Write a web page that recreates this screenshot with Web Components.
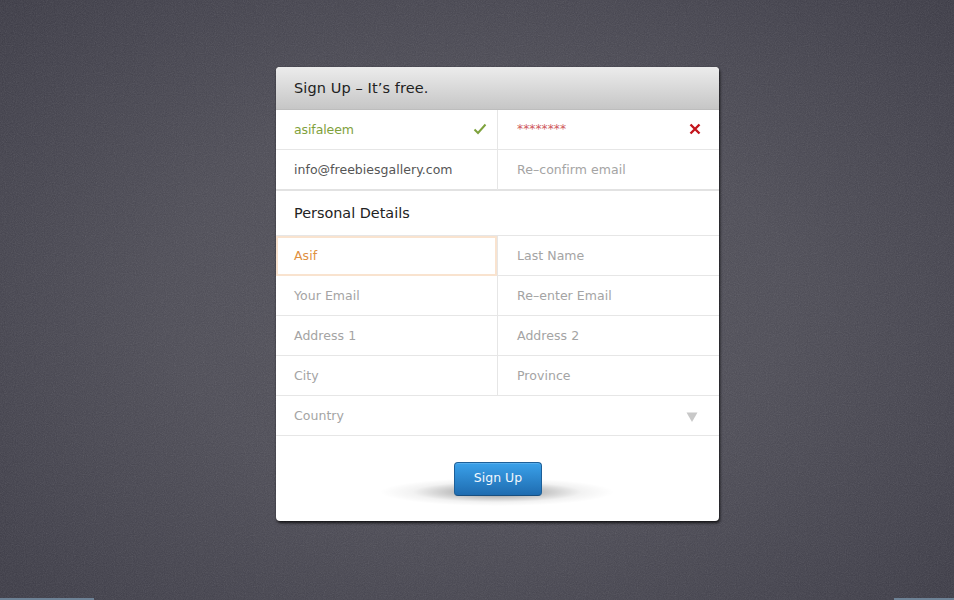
<!DOCTYPE html>
<html><head><meta charset="utf-8"><title>Sign Up</title>
<style>html,body{margin:0;padding:0;background:#4a4954}</style></head>
<body>
<su-page>
  <su-card>
    <su-header slot="header">Sign Up – It’s free.</su-header>
    <su-row>
      <su-field state="ok">asifaleem</su-field>
      <su-field state="err" second>********</su-field>
    </su-row>
    <su-row heavy>
      <su-field state="filled">info@freebiesgallery.com</su-field>
      <su-field second>Re–confirm email</su-field>
    </su-row>
    <su-section>Personal Details</su-section>
    <su-row>
      <su-field state="focus">Asif</su-field>
      <su-field second>Last Name</su-field>
    </su-row>
    <su-row>
      <su-field>Your Email</su-field>
      <su-field second>Re–enter Email</su-field>
    </su-row>
    <su-row>
      <su-field>Address 1</su-field>
      <su-field second>Address 2</su-field>
    </su-row>
    <su-row>
      <su-field>City</su-field>
      <su-field second>Province</su-field>
    </su-row>
    <su-row single>
      <su-field state="select">Country</su-field>
    </su-row>
    <su-action>Sign Up</su-action>
  </su-card>
</su-page>
<script>
function def(name, html){
  customElements.define(name, class extends HTMLElement{
    constructor(){super();this.attachShadow({mode:'open'}).innerHTML=html;}
  });
}
const font='"DejaVu Sans","Liberation Sans",sans-serif';
def('su-page',`<style>
:host{display:block;position:relative;width:954px;height:600px;overflow:hidden;box-sizing:border-box;padding:67px 0 0 276px;
font-family:${font};
background:radial-gradient(ellipse 72% 78% at 50% 50%,#53525b 0%,#4d4c56 45%,#41404b 78%,#393843 100%);}
.noise{position:absolute;inset:0;width:954px;height:600px;opacity:.16}
.strip{position:absolute;bottom:0;height:2px;background:#6d8296}
.a{left:0;width:94px}.b{left:894px;right:0}
::slotted(*){position:relative}
</style>
<svg class="noise" width="954" height="600" aria-hidden="true"><filter id="n"><feTurbulence type="fractalNoise" baseFrequency="0.9" numOctaves="2" stitchTiles="stitch"/><feColorMatrix type="saturate" values="0"/></filter><rect width="954" height="600" filter="url(#n)"/></svg>
<slot></slot><div class="strip a"></div><div class="strip b"></div>`);
def('su-card',`<style>
:host{display:flex;flex-direction:column;width:443px;height:454px;background:#fff;border-radius:4px;overflow:hidden;
box-shadow:1px 2px 3px rgba(0,0,0,.75),0 0 1px rgba(0,0,0,.4)}
</style><slot name="header"></slot><slot></slot>`);
def('su-header',`<style>
:host{display:flex;align-items:center;box-sizing:border-box;height:43px;padding:0 18px 1px;flex:none;
background:linear-gradient(#ececec,#c6c6c6);color:#222;font-size:14.5px;letter-spacing:.1px;border-bottom:1px solid #bdbdbd}
</style><slot></slot>`);
def('su-row',`<style>
:host{display:grid;grid-template-columns:221px 222px;height:40px;flex:none;box-sizing:border-box;border-bottom:1px solid #e6e6e6}
:host([single]){grid-template-columns:1fr}
:host([heavy]){height:41px;border-bottom:2px solid #e2e2e2}
</style><slot></slot>`);
def('su-section',`<style>
:host{display:flex;align-items:center;box-sizing:border-box;height:45px;flex:none;padding:0 18px 1px;color:#222;font-size:14.4px;border-bottom:1px solid #e6e6e6}
</style><slot></slot>`);
const check=`<svg class="ic" width="14" height="12" viewBox="0 0 14 12"><path d="M1.5 6.5 L5 10 L12.5 1.5" fill="none" stroke="#7ea23d" stroke-width="2"/></svg>`;
const cross=`<svg class="ic" width="12" height="12" viewBox="0 0 12 12"><path d="M1.5 1.5 L10.5 10.5 M10.5 1.5 L1.5 10.5" fill="none" stroke="#c4151c" stroke-width="2.4"/></svg>`;
const tri=`<svg class="ic tri" width="12" height="10" viewBox="0 0 12 10"><path d="M0.5 0.5 H11.5 L6 10 Z" fill="#c8c8c8"/></svg>`;
customElements.define('su-field',class extends HTMLElement{
  constructor(){super();
    const st=this.getAttribute('state')||'';
    const icon=st==='ok'?check:st==='err'?cross:st==='select'?tri:'';
    this.attachShadow({mode:'open'}).innerHTML=`<style>
:host{display:flex;align-items:center;justify-content:space-between;box-sizing:border-box;margin-bottom:-1px;height:40px;
padding:0 18px 2px;font-size:12.5px;color:#a4a4a4;letter-spacing:.05px}
:host([second]){border-left:1px solid #e6e6e6;padding-left:19px}
:host([state=ok]){color:#7fa13c;padding-right:10px;letter-spacing:-.1px}
:host([state=err]){color:#cf5a5e;font-size:12.2px;padding-right:18px}
:host([state=filled]){color:#555;letter-spacing:.03px}
:host([state=focus]){color:#e0913f;border:2px solid #f9e3cf;padding:0 16px 2px;height:40px}
:host([state=select]){padding-right:21px}
.ic{flex:none}
.tri{margin-top:4px}
</style><span><slot></slot></span>${icon}`;
  }
});
def('su-action',`<style>
:host{display:flex;justify-content:center;flex:1;padding:26px 0 0 1px;box-sizing:border-box;position:relative}
.sh{position:absolute;left:104px;top:42px;width:234px;height:28px;background:radial-gradient(ellipse 50% 50% at 50% 50%,rgba(0,0,0,.55),rgba(0,0,0,.24) 38%,rgba(0,0,0,.05) 72%,rgba(0,0,0,0) 100%)}
button{position:relative;width:88px;height:34px;padding:0 0 3px;border:1px solid #1d5f98;border-bottom-color:#174f80;border-radius:4px;
background:linear-gradient(#3aa1ea,#1f6cb0);color:#f2f8fd;font:12.5px ${font};box-shadow:inset 0 1px 0 rgba(255,255,255,.15)}
</style><div class="sh"></div><button><slot></slot></button>`);
</script>
</body></html>
